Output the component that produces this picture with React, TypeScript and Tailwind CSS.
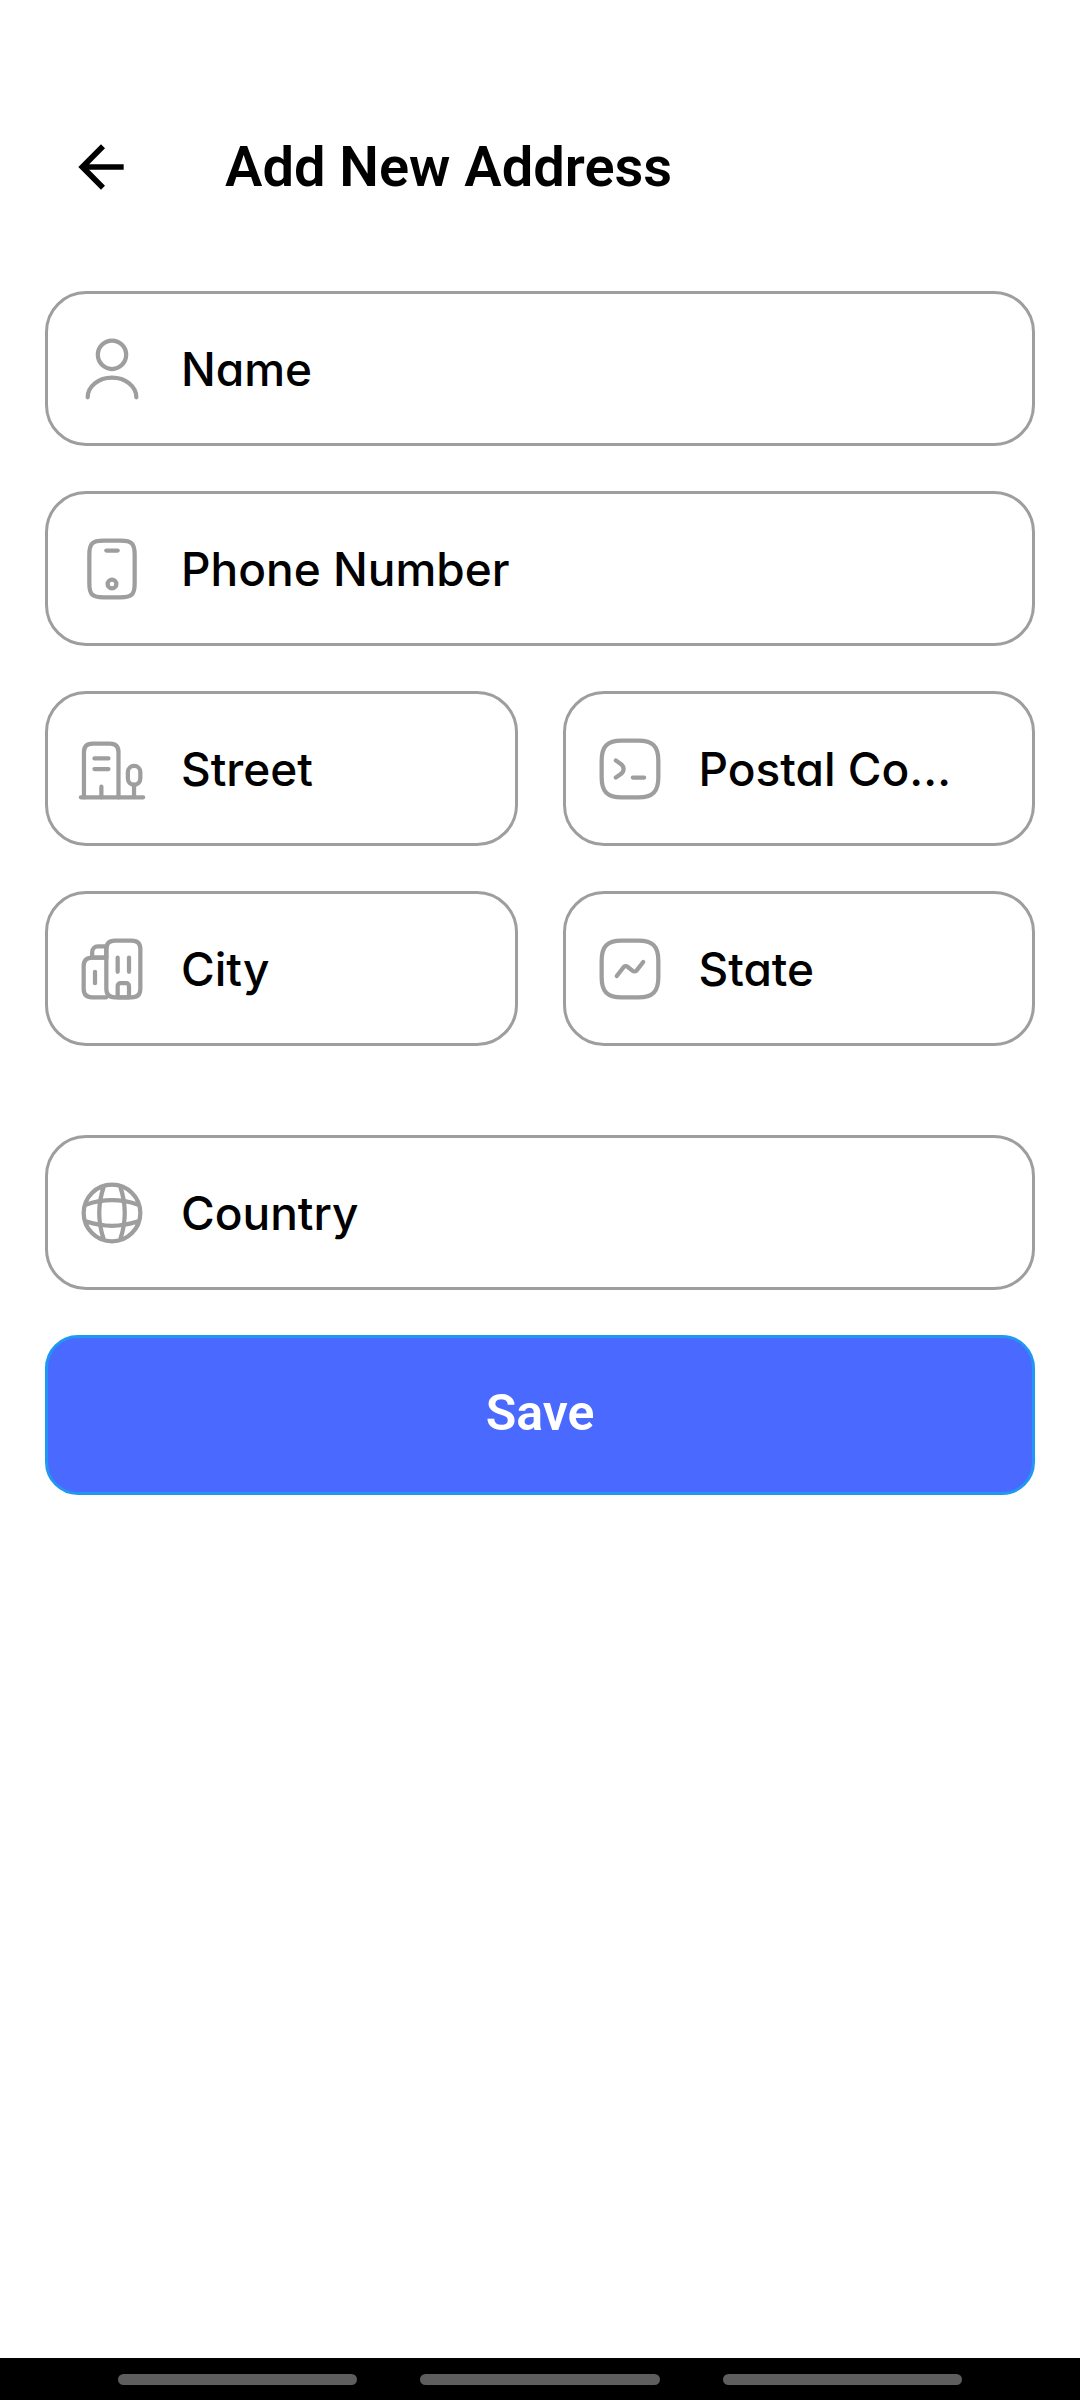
import type { ReactNode } from "react";

function Icon({ children }: { children: ReactNode }) {
  return (
    <svg
      viewBox="0 0 24 24"
      fill="none"
      stroke="currentColor"
      strokeWidth="1.5"
      strokeLinecap="round"
      strokeLinejoin="round"
      aria-hidden="true"
      className="size-[68px] shrink-0 text-[#9e9e9e]"
    >
      {children}
    </svg>
  );
}

const roundedSquare = "M9 22h6c5 0 7-2 7-7V9c0-5-2-7-7-7H9C4 2 2 4 2 9v6c0 5 2 7 7 7Z";

const UserIcon = (
  <Icon>
    <circle cx="12" cy="7" r="5" />
    <path d="M20.59 22c0-3.87-3.85-7-8.59-7s-8.59 3.13-8.59 7" />
  </Icon>
);

const MobileIcon = (
  <Icon>
    <path d="M20 7v10c0 4-1 5-5 5H9c-4 0-5-1-5-5V7c0-4 1-5 5-5h6c4 0 5 1 5 5Z" />
    <path d="M14 5.5h-4" />
    <circle cx="12" cy="17.3" r="1.55" />
  </Icon>
);

const BuildingIcon = (
  <Icon>
    <path d="M1 22h22M19.78 22v-4.45" />
    <path d="M19.8 10.89c-1.22 0-2.2.98-2.2 2.2v2.27c0 1.22.98 2.2 2.2 2.2 1.22 0 2.2-.98 2.2-2.2v-2.27c0-1.22-.98-2.2-2.2-2.2Z" />
    <path d="M2.1 22V6.03c0-2.01 1-3.02 2.99-3.02h6.22c1.99 0 2.98 1.01 2.98 3.02V22" />
    <path d="M5.8 8.25h4.95M5.8 12h4.95M8.25 22v-3.75" />
  </Icon>
);

const TerminalIcon = (
  <Icon>
    <path d={roundedSquare} />
    <path d="M7 8.96l1.54 1.06c1.6 1.1 1.6 2.86 0 3.96L7 15.04M13 15.04h4" />
  </Icon>
);

const BuildingsIcon = (
  <Icon>
    <path d="M10 22H5c-2 0-3-1-3-3v-8c0-2 1-3 3-3h5" />
    <path d="M10.11 4c-.08.3-.11.63-.11 1v3H5V6c0-1.1.9-2 2-2h3.11Z" />
    <path d="M14 8v5M18 8v5M6 13v4" />
    <path d="M17 17h-2c-.55 0-1 .45-1 1v4h4v-4c0-.55-.45-1-1-1Z" />
    <path d="M10 19V5c0-2 1-3 3-3h6c2 0 3 1 3 3v14c0 2-1 3-3 3h-6c-2 0-3-1-3-3Z" />
  </Icon>
);

const TrendIcon = (
  <Icon>
    <path d={roundedSquare} />
    <path d="M7.33 14.49l2.38-3.09c.34-.44.97-.52 1.41-.18l1.83 1.44c.44.34 1.07.26 1.41-.17l2.31-2.98" />
  </Icon>
);

const GlobeIcon = (
  <Icon>
    <circle cx="12" cy="12" r="10" />
    <path d="M8 3h1a28.424 28.424 0 0 0 0 18H8M15 3a28.424 28.424 0 0 1 0 18" />
    <path d="M3 16v-1a28.424 28.424 0 0 0 18 0v1M3 9a28.424 28.424 0 0 1 18 0" />
  </Icon>
);

function Field({ label, name, icon, type = "text" }: { label: string; name: string; icon: ReactNode; type?: string }) {
  return (
    <label className="flex h-[155px] min-w-0 items-center gap-[35px] rounded-[41px] border-3 border-[#9e9e9e] pr-[76px] pl-[30px]">
      {icon}
      <input
        type={type}
        name={name}
        aria-label={label}
        placeholder={label}
        className="w-full min-w-0 flex-1 bg-transparent font-['Inter',sans-serif] text-[46px] leading-[60px] font-medium text-ellipsis text-black outline-none [font-feature-settings:'cv11'] placeholder:text-black placeholder:opacity-100"
      />
    </label>
  );
}

export default function App() {
  return (
    <div className="flex min-h-screen flex-col bg-white font-['Roboto',sans-serif] text-black">
      <header className="flex items-center gap-[90px] px-[67px] pt-[133px]">
        <button type="button" aria-label="Back" className="shrink-0">
          <svg viewBox="0 0 24 24" fill="currentColor" className="size-[68px]" aria-hidden="true">
            <path d="M20 11H7.83l5.59-5.59L12 4l-8 8 8 8 1.41-1.41L7.83 13H20v-2Z" />
          </svg>
        </button>
        <h1 className="text-[56px] leading-[68px] font-semibold">Add New Address</h1>
      </header>

      <form className="flex flex-1 flex-col gap-[45px] px-[45px] pt-[90px]" onSubmit={(e) => e.preventDefault()}>
        <Field label="Name" name="name" icon={UserIcon} />
        <Field label="Phone Number" name="phone" type="tel" icon={MobileIcon} />
        <div className="grid grid-cols-2 gap-[45px]">
          <Field label="Street" name="street" icon={BuildingIcon} />
          <Field label="Postal Code" name="postal" icon={TerminalIcon} />
          <Field label="City" name="city" icon={BuildingsIcon} />
          <Field label="State" name="state" icon={TrendIcon} />
        </div>
        <div className="mt-11 flex flex-col gap-[45px]">
          <Field label="Country" name="country" icon={GlobeIcon} />
          <button
            type="submit"
            className="h-[160px] rounded-[33px] border-3 border-[#2196f3] bg-[#4a69ff] pb-1 text-[50px] leading-[60px] font-semibold text-white"
          >
            Save
          </button>
        </div>
      </form>

      <footer className="flex h-[42px] items-center gap-[63px] bg-black px-[118px]">
        <span className="h-[11px] flex-1 rounded-[6px] bg-[#5e5e5e]" />
        <span className="h-[11px] flex-1 rounded-[6px] bg-[#5e5e5e]" />
        <span className="h-[11px] flex-1 rounded-[6px] bg-[#5e5e5e]" />
      </footer>
    </div>
  );
}
